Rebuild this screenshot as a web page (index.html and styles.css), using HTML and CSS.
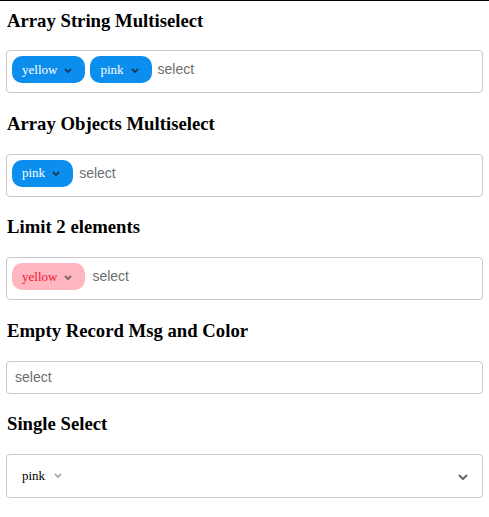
FILE: index.html
```html
<!DOCTYPE html>
<html>
<head>
<meta charset="utf-8">
<link rel="stylesheet" href="styles.css">
</head>
<body>
<div class="page">
  <h3>Array String Multiselect</h3>
  <div class="ms">
    <span class="chip">yellow <svg class="chev" viewBox="0 0 8 5"><path d="M1 1l3 3 3-3"/></svg></span>
    <span class="chip">pink <svg class="chev" viewBox="0 0 8 5"><path d="M1 1l3 3 3-3"/></svg></span>
    <span class="ph">select</span>
  </div>

  <h3>Array Objects Multiselect</h3>
  <div class="ms">
    <span class="chip">pink <svg class="chev" viewBox="0 0 8 5"><path d="M1 1l3 3 3-3"/></svg></span>
    <span class="ph">select</span>
  </div>

  <h3>Limit 2 elements</h3>
  <div class="ms">
    <span class="chip chip-pink">yellow <svg class="chev" viewBox="0 0 8 5"><path d="M1 1l3 3 3-3"/></svg></span>
    <span class="ph ph-wide">select</span>
  </div>

  <h3>Empty Record Msg and Color</h3>
  <div class="ms ms-empty">
    <span class="ph">select</span>
  </div>

  <h3>Single Select</h3>
  <div class="single">
    <span class="value">pink <svg class="chev chev-light" viewBox="0 0 8 5"><path d="M1 1l3 3 3-3"/></svg></span>
    <svg class="caret" viewBox="0 0 10 6"><path d="M1 1l4 4 4-4"/></svg>
  </div>
</div>
</body>
</html>
```

FILE: styles.css
```css
html, body {
  margin: 0;
  background: #fff;
}

.page {
  border-top: 1px solid #000;
  padding: 0 6px;
  font-family: "Liberation Serif", "Times New Roman", serif;
  color: #000;
}

h3 {
  font-size: 18.72px;
  line-height: 23px;
  font-weight: bold;
  margin: 18.72px 0;
  padding-left: 1px;
}

h3:first-child {
  margin-top: 7.5px;
}

.ms {
  box-sizing: border-box;
  height: 43px;
  border: 1px solid #c8c8c8;
  border-radius: 4px;
  display: flex;
  align-items: flex-start;
  gap: 5px;
  padding: 5px 5px;
}

.chip {
  display: inline-flex;
  align-items: center;
  gap: 7px;
  height: 27px;
  box-sizing: border-box;
  padding: 0 13px 0 10px;
  border-radius: 10px;
  background: #0c8eef;
  color: #fff;
  font-size: 13px;
  font-family: "Liberation Serif", "Times New Roman", serif;
}

.chip .chev {
  width: 8px;
  height: 5px;
  fill: none;
  stroke: #1b3d5e;
  stroke-width: 2;
  margin-top: 1px;
}

.chip-pink {
  background: #ffb6c1;
  color: #f0142a;
}

.chip-pink .chev {
  stroke: #7a6a6d;
}

.ph {
  line-height: 27px;
  font-family: "Liberation Sans", Arial, sans-serif;
  font-size: 14px;
  color: #6e6e6e;
  margin-left: 1px;
}

.ph-wide {
  margin-left: 2px;
}

.ms-empty {
  height: 33px;
  align-items: center;
  padding: 0 7px;
}

.single {
  box-sizing: border-box;
  height: 44px;
  border: 1px solid #c8c8c8;
  border-radius: 4px;
  display: flex;
  align-items: center;
  justify-content: space-between;
  padding: 0 14px 0 15px;
}

.value {
  display: inline-flex;
  align-items: center;
  gap: 9px;
  font-size: 13px;
}

.chev-light {
  width: 8px;
  height: 5px;
  fill: none;
  stroke: #9a9a9a;
  stroke-width: 1.6;
}

.caret {
  width: 10px;
  height: 6px;
  fill: none;
  stroke: #666;
  stroke-width: 2;
  margin-top: 2px;
}
```
